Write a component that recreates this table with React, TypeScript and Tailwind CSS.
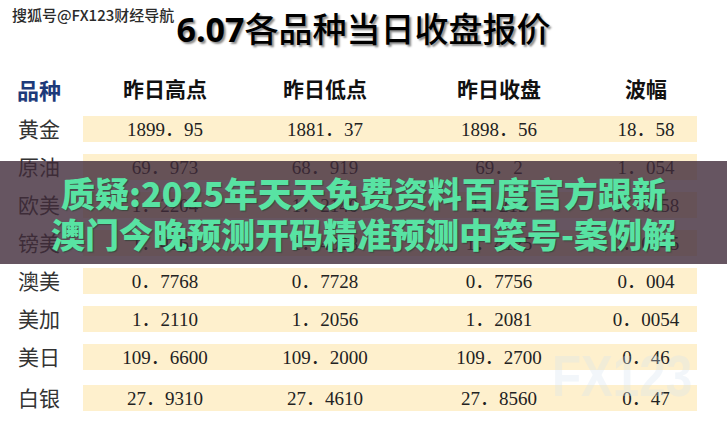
const rows = [
  { name: "黄金", v: ["1899．95", "1881．37", "1898．56", "18．58"] },
  { name: "原油", v: ["69．973", "68．919", "69．2", "1．054"] },
  { name: "欧美", v: ["1．2204", "1．2140", "1．219", "0．0058"] },
  { name: "镑美", v: ["1．4163", "1．4018", "1．4125", "0．0145"] },
  { name: "澳美", v: ["0．7768", "0．7728", "0．7756", "0．004"] },
  { name: "美加", v: ["1．2110", "1．2056", "1．2081", "0．0054"] },
  { name: "美日", v: ["109．6600", "109．2000", "109．2700", "0．46"] },
  { name: "白银", v: ["27．9310", "27．4610", "27．8560", "0．47"] },
];

const colW = ["w-[164px]", "w-[156px]", "w-[192px]", "w-[102px]"];

export default function App() {
  return (
    <div className="relative h-[426px] w-[727px] overflow-hidden bg-white font-['Noto_Sans_CJK_SC',sans-serif]">
      {/* watermark top-left */}
      <div className="absolute left-[12px] top-[5px] text-[15px] font-medium leading-[20px] text-[#2b2b2b] [text-shadow:0_0_2px_#fff,0_0_2px_#fff,0_0_2px_#fff]">
        搜狐号@FX123财经导航
      </div>

      <div className="pt-[8px] text-center text-[34px] leading-[40px] text-black [text-shadow:2px_2px_2px_rgba(0,0,0,0.45)]">
        <span className="font-['Open_Sans',sans-serif] font-bold">6.07</span>
        <span className="font-medium">各品种当日收盘报价</span>
      </div>

      <div className="mt-[28px] flex h-[24px] items-center">
        <div className="w-[83px] pl-[17px] text-[22px] font-bold text-[#1d3a7a]">品种</div>
        <div className="flex text-[21px] font-bold text-[#111]">
          <div className={`${colW[0]} text-center`}>昨日高点</div>
          <div className={`${colW[1]} text-center`}>昨日低点</div>
          <div className={`${colW[2]} text-center`}>昨日收盘</div>
          <div className={`${colW[3]} text-center`}>波幅</div>
        </div>
      </div>

      <div className="mt-[15px] flex flex-col gap-[12px]">
        {rows.map((r, i) => (
          <div key={r.name} className={`flex h-[26px] items-center ${i === 7 ? "mt-[3px]" : ""}`}>
            <div className="w-[83px] pl-[18px] text-[21px] text-[#333]">{r.name}</div>
            <div className="flex h-[26px] w-[614px] items-center bg-[#fef0cd] pt-[3px] font-['Liberation_Serif','Noto_Sans_CJK_SC',serif] text-[19px] text-[#222]">
              {r.v.map((v, j) => (
                <div key={j} className={`${colW[j]} text-center`}>
                  {v}
                </div>
              ))}
            </div>
          </div>
        ))}
      </div>

      {/* faded FX123 watermark */}
      <div className="pointer-events-none absolute left-[552px] top-[348px] w-[150px] origin-left scale-x-[0.82] font-['Liberation_Sans',sans-serif] text-[58px] font-bold leading-[56px] text-[#d6e3ef] opacity-30">
        FX123
      </div>

      {/* overlay banner */}
      <div className="absolute left-0 top-[161px] flex h-[103px] w-full flex-col items-center justify-center bg-[rgba(64,42,58,0.8)] text-[34px] font-black leading-[41px] text-[#58e3a3] [text-shadow:1px_1px_1px_rgba(20,60,40,0.5)]">
        <div>质疑:2025年天天免费资料百度官方跟新</div>
        <div>澳门今晚预测开码精准预测中笑号-案例解</div>
      </div>
    </div>
  );
}
